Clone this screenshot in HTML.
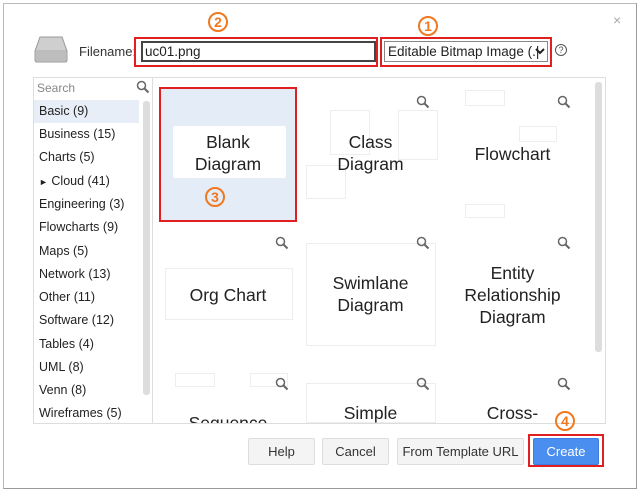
<!DOCTYPE html>
<html><head><meta charset="utf-8"><style>
*{box-sizing:border-box;margin:0;padding:0}
body{width:640px;height:492px;background:#fff;font-family:"Liberation Sans",sans-serif;position:relative;overflow:hidden}
.a{position:absolute}
.frame{left:3px;top:3px;width:634px;height:486px;border:1px solid #bbb;border-right-color:#999;border-bottom-color:#999}
.red{position:absolute;border:2px solid #e02020}
.num{position:absolute;width:20px;height:20px;border:2px solid #f07820;border-radius:50%;color:#f07820;font-weight:bold;font-size:14px;text-align:center;line-height:17px}
.list div{position:absolute;left:6px;font-size:12.5px;color:#222;white-space:nowrap}
.t{position:absolute;font-size:17.5px;color:#222;text-align:center;line-height:22px}
.g{position:absolute;border:1px solid #eee}
.mag{position:absolute;width:14px;height:14px}
.btn{position:absolute;top:438px;height:27px;background:#f4f4f4;border:1px solid #ddd;border-radius:2px;font-size:13px;color:#333;text-align:center;line-height:25px}
</style></head><body>
<div class="a frame"></div>
<div class="a" style="left:613px;top:12px;color:#aaa;font-size:14px">×</div>
<div class="a" style="left:34px;top:35px;width:34px;height:28px;">
<svg width="34" height="28"><path d="M6 2 H28 L33 16 V25 Q33 27 31 27 H3 Q1 27 1 25 V16 Z" fill="#cfcfcf" stroke="#999"/><path d="M1 16 H33" stroke="#aaa"/><rect x="2" y="17" width="30" height="9" fill="#bdbdbd"/></svg></div>
<div class="a" style="left:79px;top:44px;font-size:13px;color:#333">Filename:</div>
<div class="a" style="left:141px;top:41px;width:235px;height:21px;border:2px solid #444;font-size:13.5px;padding-left:2px;line-height:17px;color:#222">uc01.png</div>
<div class="red" style="left:134px;top:37px;width:244px;height:30px"></div>
<div class="a" style="left:384px;top:41px;width:164px;height:21px;border:1px solid #888;font-size:13.5px;padding-left:3px;line-height:19px;color:#222;white-space:nowrap;overflow:hidden">Editable Bitmap Image (.|</div>
<svg class="a" style="left:535px;top:47px" width="10" height="8"><path d="M1 2 L5 6 L9 2" fill="none" stroke="#222" stroke-width="2"/></svg>
<div class="red" style="left:380px;top:37px;width:172px;height:30px"></div>
<div class="a" style="left:555px;top:44px;width:12px;height:12px;border:1px solid #555;border-radius:50%;font-size:9px;text-align:center;line-height:10px;color:#555">?</div>
<div class="num" style="left:208px;top:12px">2</div>
<div class="num" style="left:418px;top:16px">1</div>
<div class="a" style="left:33px;top:77px;width:120px;height:347px;border:1px solid #ddd"></div>
<div class="a" style="left:37px;top:81px;font-size:12px;color:#888">Search</div>
<svg class="mag" style="left:136px;top:80px" viewBox="0 0 14 14"><circle cx="5.5" cy="5.5" r="4" fill="none" stroke="#666" stroke-width="1.5"/><path d="M8.5 8.5 L12.5 12.5" stroke="#666" stroke-width="2"/></svg>
<div class="a" style="left:34px;top:100px;width:105px;height:23px;background:#e8eef7"></div>
<div class="a" style="left:143px;top:101px;width:7px;height:294px;background:#ddd;border-radius:3px"></div>
<div class="list a" style="left:33px;top:0;width:110px">
<div style="top:104px">Basic (9)</div>
<div style="top:127px">Business (15)</div>
<div style="top:150px">Charts (5)</div>
<div style="top:174px"><span style="font-size:9px">►</span> Cloud (41)</div>
<div style="top:197px">Engineering (3)</div>
<div style="top:220px">Flowcharts (9)</div>
<div style="top:244px">Maps (5)</div>
<div style="top:267px">Network (13)</div>
<div style="top:290px">Other (11)</div>
<div style="top:313px">Software (12)</div>
<div style="top:337px">Tables (4)</div>
<div style="top:360px">UML (8)</div>
<div style="top:383px">Venn (8)</div>
<div style="top:406px">Wireframes (5)</div>
</div>
<div class="a" style="left:153px;top:77px;width:453px;height:347px;border:1px solid #ddd;border-left:none;overflow:hidden">
<div class="a" style="left:442px;top:4px;width:7px;height:270px;background:#ddd;border-radius:3px"></div>
</div>
<div class="a" style="left:160px;top:88px;width:136px;height:133px;background:#e4ecf7"></div>
<div class="a" style="left:173px;top:126px;width:113px;height:52px;background:#fff;border-radius:2px"></div>
<div class="red" style="left:159px;top:87px;width:138px;height:135px"></div>
<div class="t" style="left:160px;top:131px;width:136px">Blank<br>Diagram</div>
<div class="num" style="left:205px;top:187px">3</div>
<div class="g" style="left:330px;top:110px;width:40px;height:45px"></div>
<div class="g" style="left:398px;top:110px;width:40px;height:50px"></div>
<div class="g" style="left:306px;top:165px;width:40px;height:34px"></div>
<div class="g" style="left:465px;top:90px;width:40px;height:16px"></div>
<div class="g" style="left:519px;top:126px;width:38px;height:16px"></div>
<div class="g" style="left:465px;top:204px;width:40px;height:14px"></div>
<div class="g" style="left:165px;top:268px;width:128px;height:52px"></div>
<div class="g" style="left:306px;top:243px;width:130px;height:103px"></div>
<div class="g" style="left:175px;top:373px;width:40px;height:14px"></div>
<div class="g" style="left:250px;top:373px;width:38px;height:14px"></div>
<div class="g" style="left:306px;top:383px;width:130px;height:40px"></div>
<div class="t" style="left:305px;top:131px;width:131px">Class<br>Diagram</div>
<div class="t" style="left:447px;top:143px;width:131px">Flowchart</div>
<div class="t" style="left:160px;top:284px;width:136px">Org Chart</div>
<div class="t" style="left:305px;top:272px;width:131px">Swimlane<br>Diagram</div>
<div class="t" style="left:447px;top:262px;width:131px">Entity<br>Relationship<br>Diagram</div>
<div class="t" style="left:305px;top:402px;width:131px">Simple</div>
<div class="t" style="left:447px;top:402px;width:131px">Cross-</div>
<div class="t" style="left:160px;top:412px;width:136px;height:11px;overflow:hidden">Sequence</div>
<svg class="mag" style="left:416px;top:95px" viewBox="0 0 14 14"><circle cx="5.5" cy="5.5" r="4" fill="none" stroke="#666" stroke-width="1.5"/><path d="M8.5 8.5 L12.5 12.5" stroke="#666" stroke-width="2"/></svg>
<svg class="mag" style="left:557px;top:95px" viewBox="0 0 14 14"><circle cx="5.5" cy="5.5" r="4" fill="none" stroke="#666" stroke-width="1.5"/><path d="M8.5 8.5 L12.5 12.5" stroke="#666" stroke-width="2"/></svg>
<svg class="mag" style="left:275px;top:236px" viewBox="0 0 14 14"><circle cx="5.5" cy="5.5" r="4" fill="none" stroke="#666" stroke-width="1.5"/><path d="M8.5 8.5 L12.5 12.5" stroke="#666" stroke-width="2"/></svg>
<svg class="mag" style="left:416px;top:236px" viewBox="0 0 14 14"><circle cx="5.5" cy="5.5" r="4" fill="none" stroke="#666" stroke-width="1.5"/><path d="M8.5 8.5 L12.5 12.5" stroke="#666" stroke-width="2"/></svg>
<svg class="mag" style="left:557px;top:236px" viewBox="0 0 14 14"><circle cx="5.5" cy="5.5" r="4" fill="none" stroke="#666" stroke-width="1.5"/><path d="M8.5 8.5 L12.5 12.5" stroke="#666" stroke-width="2"/></svg>
<svg class="mag" style="left:275px;top:377px" viewBox="0 0 14 14"><circle cx="5.5" cy="5.5" r="4" fill="none" stroke="#666" stroke-width="1.5"/><path d="M8.5 8.5 L12.5 12.5" stroke="#666" stroke-width="2"/></svg>
<svg class="mag" style="left:416px;top:377px" viewBox="0 0 14 14"><circle cx="5.5" cy="5.5" r="4" fill="none" stroke="#666" stroke-width="1.5"/><path d="M8.5 8.5 L12.5 12.5" stroke="#666" stroke-width="2"/></svg>
<svg class="mag" style="left:557px;top:377px" viewBox="0 0 14 14"><circle cx="5.5" cy="5.5" r="4" fill="none" stroke="#666" stroke-width="1.5"/><path d="M8.5 8.5 L12.5 12.5" stroke="#666" stroke-width="2"/></svg>
<div class="num" style="left:555px;top:411px">4</div>
<div class="btn" style="left:248px;width:67px">Help</div>
<div class="btn" style="left:322px;width:67px">Cancel</div>
<div class="btn" style="left:397px;width:127px">From Template URL</div>
<div class="btn" style="left:533px;width:66px;background:#4a8ef0;border-color:#3b7de0;color:#fff">Create</div>
<div class="red" style="left:528px;top:434px;width:76px;height:33px"></div>
</body></html>
